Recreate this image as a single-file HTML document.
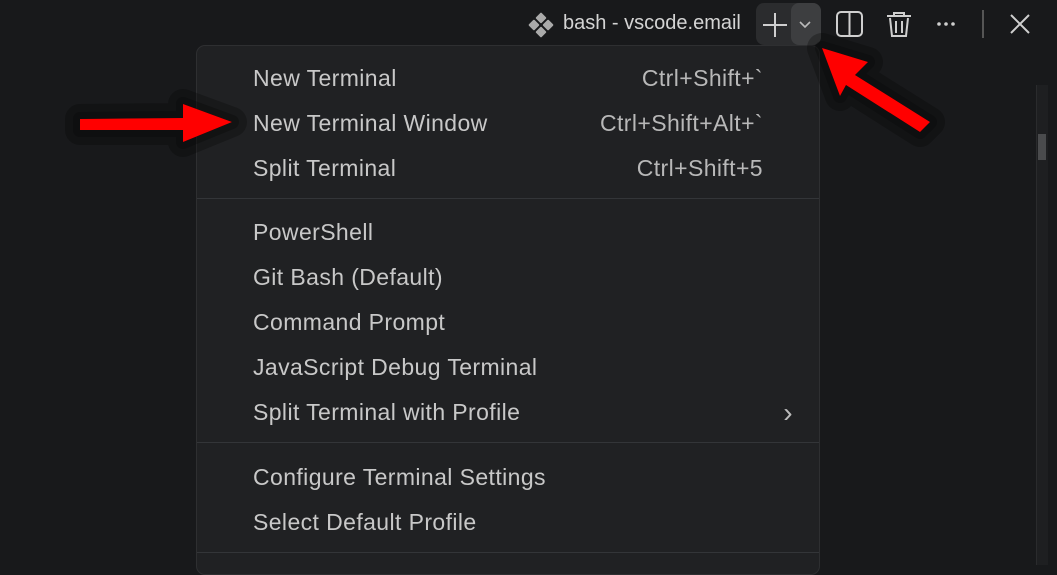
<!DOCTYPE html>
<html><head><style>
body{margin:0;width:1057px;height:559px;background:#18191b;overflow:hidden;position:relative;font-family:"Liberation Sans",sans-serif;}
.menu{position:absolute;left:196px;top:45px;width:624px;height:530px;background:#202123;border:1px solid #2e2f31;border-radius:9px;box-sizing:border-box;}
.row{position:absolute;left:56px;right:56px;height:45px;line-height:45px;color:#c8c8c8;font-size:23px;letter-spacing:0.4px;}
.row span{position:absolute;right:0;top:0;color:#b8b8b8;}
.sep{position:absolute;left:0;right:0;height:1px;background:#333538;}
.top{position:absolute;color:#d4d4d4;font-size:20px;}
</style></head><body>
<div class="top" style="left:563px;top:12px;">bash - vscode.email</div>
<svg style="position:absolute;left:527px;top:11px" width="28" height="28" viewBox="0 0 28 28"><g fill="#aaa" transform="rotate(45 14 14)"><rect x="5" y="5" width="8" height="8" rx="1"/><rect x="15" y="5" width="8" height="8" rx="1"/><rect x="5" y="15" width="8" height="8" rx="1"/><rect x="15" y="15" width="8" height="8" rx="1"/></g></svg>
<div style="position:absolute;left:756px;top:3px;width:65px;height:42px;background:#2b2c2e;border-radius:8px"></div>
<div style="position:absolute;left:791px;top:3px;width:30px;height:42px;background:#3d3e40;border-radius:8px"></div>
<svg style="position:absolute;left:756px;top:3px" width="65" height="42"><path d="M19 10v24M7 22h24" stroke="#cfcfcf" stroke-width="2"/><path d="M44 19l5 5 5-5" stroke="#bbb" stroke-width="1.6" fill="none"/></svg>
<svg style="position:absolute;left:830px;top:6px" width="200" height="36"><rect x="7" y="6" width="25" height="24" rx="4" fill="none" stroke="#cfcfcf" stroke-width="2"/><path d="M19.5 6v24" stroke="#cfcfcf" stroke-width="2"/>
<path d="M57 10h24M64 10V7h10v3M60 12l2 18h14l2-18M66 15v12M72 15v12" fill="none" stroke="#cfcfcf" stroke-width="2"/>
<circle cx="109" cy="18" r="1.8" fill="#cfcfcf"/><circle cx="116" cy="18" r="1.8" fill="#cfcfcf"/><circle cx="123" cy="18" r="1.8" fill="#cfcfcf"/>
<path d="M153 4v28" stroke="#555" stroke-width="2"/><path d="M181 9l18 18M199 9l-18 18" stroke="#cfcfcf" stroke-width="2"/></svg>
<div style="position:absolute;left:1036px;top:85px;width:11px;height:480px;background:#1e1f21;border-left:1px solid #2a2b2d"></div>
<div style="position:absolute;left:1038px;top:134px;width:8px;height:26px;background:#4a4b4d"></div>
<div class="menu">
<div class="row" style="top:10px">New Terminal<span>Ctrl+Shift+`</span></div>
<div class="row" style="top:55px">New Terminal Window<span>Ctrl+Shift+Alt+`</span></div>
<div class="row" style="top:100px">Split Terminal<span>Ctrl+Shift+5</span></div>
<div class="sep" style="top:152px"></div>
<div class="row" style="top:164px">PowerShell</div>
<div class="row" style="top:209px">Git Bash (Default)</div>
<div class="row" style="top:254px">Command Prompt</div>
<div class="row" style="top:299px">JavaScript Debug Terminal</div>
<div class="row" style="top:344px">Split Terminal with Profile<span style="right:-30px;font-size:28px;color:#bbb">&#x203A;</span></div>
<div class="sep" style="top:396px"></div>
<div class="row" style="top:409px">Configure Terminal Settings</div>
<div class="row" style="top:454px">Select Default Profile</div>
<div class="sep" style="top:506px"></div>
</div>
<svg style="position:absolute;left:0;top:0" width="1057" height="559">
<g stroke="rgba(8,8,8,0.3)" stroke-width="30" stroke-linejoin="round"><polygon points="80,119 183,118 183,104 232,122 183,142 183,130 80,130"/><polygon points="822,48 868,62 855,75 930,122 920,132 846,85 840,96"/></g>
<g stroke="rgba(8,8,8,0.35)" stroke-width="14" stroke-linejoin="round"><polygon points="80,119 183,118 183,104 232,122 183,142 183,130 80,130"/><polygon points="822,48 868,62 855,75 930,122 920,132 846,85 840,96"/></g>
<polygon fill="#f00" points="80,119 183,118 183,104 232,122 183,142 183,130 80,130"/>
<polygon fill="#f00" points="822,48 868,62 855,75 930,122 920,132 846,85 840,96"/>
</svg>
</body></html>
